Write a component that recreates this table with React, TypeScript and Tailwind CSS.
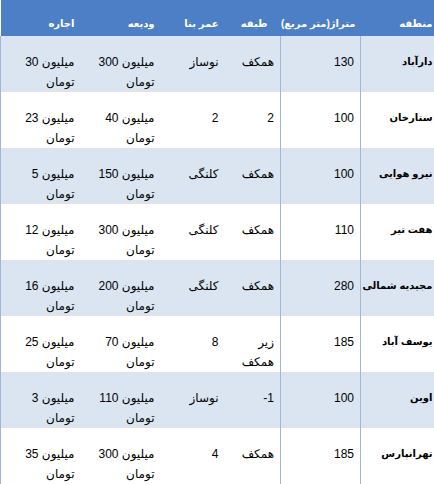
import React from "react";

type Row = {
  area: string;
  size: string;
  floor: string[];
  age: string;
  deposit: string;
  rent: string;
  h: string;
};

const rows: Row[] = [
  { area: "دارآباد", size: "130", floor: ["همکف"], age: "نوساز", deposit: "300", rent: "30", h: "h-[55px]" },
  { area: "ستارخان", size: "100", floor: ["2"], age: "2", deposit: "40", rent: "23", h: "h-[56px]" },
  { area: "نیرو هوایی", size: "100", floor: ["همکف"], age: "کلنگی", deposit: "150", rent: "5", h: "h-[56px]" },
  { area: "هفت تیر", size: "110", floor: ["همکف"], age: "کلنگی", deposit: "300", rent: "12", h: "h-[56px]" },
  { area: "مجیدیه شمالی", size: "280", floor: ["همکف"], age: "کلنگی", deposit: "200", rent: "16", h: "h-[56px]" },
  { area: "یوسف آباد", size: "185", floor: ["زیر", "همکف"], age: "8", deposit: "70", rent: "25", h: "h-[56px]" },
  { area: "اوین", size: "100", floor: ["1-"], age: "نوساز", deposit: "110", rent: "3", h: "h-[56px]" },
  { area: "تهرانپارس", size: "185", floor: ["همکف"], age: "4", deposit: "300", rent: "35", h: "h-[55px]" },
];

// number sits left of the word, as in the sheet
function Money({ n }: { n: string }) {
  return (
    <>
      <div className="whitespace-nowrap">{"میلیون " + n}</div>
      <div>تومان</div>
    </>
  );
}

export default function App() {
  const cell = "align-top pt-4 pr-1.5 text-right";
  const th = "align-top pt-[17px] text-right font-bold whitespace-nowrap";
  return (
    <div
      className="w-[434px] h-[484px] bg-white overflow-hidden"
      style={{ fontFamily: '"Liberation Sans", "DejaVu Sans", sans-serif' }}
    >
      <table dir="rtl" className="w-[434px] table-fixed border-collapse text-[12px] leading-5 text-black">
        <colgroup>
          <col className="w-[74px]" />
          <col className="w-[80px]" />
          <col className="w-[56px]" />
          <col className="w-[64px]" />
          <col className="w-[80px]" />
          <col className="w-[80px]" />
        </colgroup>
        <thead>
          <tr className="h-9 bg-[#4d7fc6] text-white text-[10px] leading-[14px]">
            <th className={`${th} pr-0.5`}>منطقه</th>
            <th className={`${th} pr-[5px]`}>متراژ(متر مربع)</th>
            <th className={`${th} pr-[13px]`}>طبقه</th>
            <th className={`${th} pr-1.5`}>عمر بنا</th>
            <th className={`${th} pr-1.5`}>ودیعه</th>
            <th className={`${th} pr-1.5`}>اجاره</th>
          </tr>
        </thead>
        <tbody>
          {rows.map((r, i) => (
            <tr
              key={r.area}
              className={`${r.h} ${i % 2 === 0 ? "bg-[#dbe5f2]" : "bg-white"} ${i === rows.length - 1 ? "border-b border-[#9fb6d9]" : ""}`}
            >
              <td className="align-top pt-4 pr-0.5 text-right text-[10px] font-bold whitespace-nowrap">{r.area}</td>
              <td className={`${cell} border-x border-[#9fb6d9]`}>{r.size}</td>
              <td className={cell}>
                {r.floor.map((f) => (
                  <div key={f}>{f}</div>
                ))}
              </td>
              <td className={cell}>{r.age}</td>
              <td className={cell}>
                <Money n={r.deposit} />
              </td>
              <td className={`${cell} border-l border-[#9fb6d9]`}>
                <Money n={r.rent} />
              </td>
            </tr>
          ))}
        </tbody>
      </table>
    </div>
  );
}
